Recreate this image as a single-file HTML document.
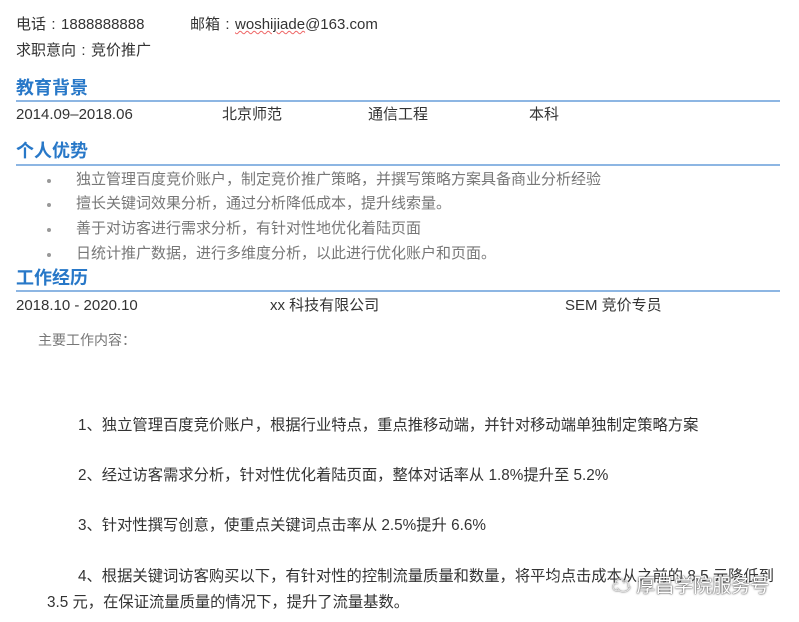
<!DOCTYPE html>
<html><head><meta charset="utf-8"><style>
body{margin:0;width:799px;height:622px;background:#fff;position:relative;overflow:hidden;font-family:"Liberation Sans","Noto Sans CJK SC",sans-serif;color:#333;font-size:15px}
.t{position:absolute;white-space:nowrap;line-height:1}
.h{position:absolute;left:16px;font-size:18px;font-weight:bold;color:#2878c8;line-height:1}
.ln{position:absolute;left:16px;width:764px;height:2px;background:#8db6e3}
.g{color:#777;font-size:15px}
.d{position:absolute;left:47px;width:4px;height:4px;border-radius:50%;background:#999}
.c{display:inline-block;width:15px;text-align:center}
</style></head><body>
<div class="t" style="left:16px;top:17px">电话<span class="c">:</span>1888888888</div>
<div class="t" style="left:190px;top:17px">邮箱<span class="c">:</span><span style="text-decoration:underline wavy #e66;text-decoration-thickness:1px">woshijiade</span>@163.com</div>
<div class="t" style="left:16px;top:43px">求职意向<span class="c">:</span>竞价推广</div>
<div class="h" style="top:79px">教育背景</div><div class="ln" style="top:100px"></div>
<div class="t" style="left:16px;top:107px">2014.09–2018.06</div>
<div class="t" style="left:222px;top:107px">北京师范</div>
<div class="t" style="left:368px;top:107px">通信工程</div>
<div class="t" style="left:529px;top:107px">本科</div>
<div class="h" style="top:142px">个人优势</div><div class="ln" style="top:164px"></div>
<div class="d" style="top:179px"></div><div class="t g" style="left:76px;top:172px">独立管理百度竞价账户，制定竞价推广策略，并撰写策略方案具备商业分析经验</div>
<div class="d" style="top:203px"></div><div class="t g" style="left:76px;top:196px">擅长关键词效果分析，通过分析降低成本，提升线索量。</div>
<div class="d" style="top:228px"></div><div class="t g" style="left:76px;top:221px">善于对访客进行需求分析，有针对性地优化着陆页面</div>
<div class="d" style="top:253px"></div><div class="t g" style="left:76px;top:246px">日统计推广数据，进行多维度分析，以此进行优化账户和页面。</div>
<div class="h" style="top:269px">工作经历</div><div class="ln" style="top:290px"></div>
<div class="t" style="left:16px;top:298px">2018.10 - 2020.10</div>
<div class="t" style="left:270px;top:298px">xx 科技有限公司</div>
<div class="t" style="left:565px;top:298px">SEM 竞价专员</div>
<div class="t g" style="left:38px;top:333px;font-size:14px">主要工作内容：</div>
<div class="t" style="left:78px;top:418px;font-size:15.3px">1、独立管理百度竞价账户，根据行业特点，重点推移动端，并针对移动端单独制定策略方案</div>
<div class="t" style="left:78px;top:468px;font-size:15.3px">2、经过访客需求分析，针对性优化着陆页面，整体对话率从 1.8%提升至 5.2%</div>
<div class="t" style="left:78px;top:518px;font-size:15.3px">3、针对性撰写创意，使重点关键词点击率从 2.5%提升 6.6%</div>
<div class="t" style="left:78px;top:569px;font-size:15.3px">4、根据关键词访客购买以下，有针对性的控制流量质量和数量，将平均点击成本从之前的 8.5 元降低到</div>
<div class="t" style="left:47px;top:595px;font-size:15.3px">3.5 元，在保证流量质量的情况下，提升了流量基数。</div>
<div class="t" style="left:612px;top:577px;font-size:19px;color:#fff;text-shadow:0 0 2px #444,0 0 1px #444">☁ 厚昌学院服务号</div>
</body></html>
